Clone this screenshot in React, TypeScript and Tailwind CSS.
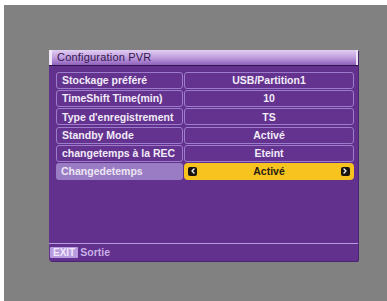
import { ChevronLeft, ChevronRight } from 'lucide-react';

const rows = [
  { label: 'Stockage préféré', value: 'USB/Partition1' },
  { label: 'TimeShift Time(min)', value: '10' },
  { label: "Type d'enregistrement", value: 'TS' },
  { label: 'Standby Mode', value: 'Activé' },
  { label: 'changetemps à la REC', value: 'Eteint' },
];

function ArrowKey({ dir }: { dir: 'left' | 'right' }) {
  const Icon = dir === 'left' ? ChevronLeft : ChevronRight;
  return (
    <span className="flex items-center justify-center w-[9px] h-[9px] rounded-[2px] bg-[#1a1410]">
      <Icon className="w-[8px] h-[8px] text-white" strokeWidth={4} />
    </span>
  );
}

export default function App() {
  return (
    <div
      className="w-[387px] h-[301px] bg-[#818181] border-t-[5px] border-l-[4px] border-white overflow-hidden"
      style={{ fontFamily: '"Liberation Sans", Arial, sans-serif' }}
    >
      <div className="ml-[45px] mt-[45px] w-[309px] h-[211px] flex flex-col bg-[#62318d] rounded-b-[2px] shadow-[1px_1px_0_#4a2470]">
        {/* title bar */}
        <div className="h-[15px] flex items-center bg-gradient-to-b from-[#e2cef2] via-[#c09ede] to-[#9060bc] border-l-[3px] border-[#f0e6f8] border-r-[2px] border-r-[#ece4f2] pl-[5px]">
          <span className="text-[11px] leading-none text-[#34164f] tracking-[0.2px]">Configuration PVR</span>
        </div>
        <div className="h-px bg-[#2e1448]" />

        {/* settings list */}
        <div className="flex-1 flex flex-col gap-[1.2px] pt-[6px] pl-[7px] pr-[4px]">
          {rows.map((row) => (
            <div key={row.label} className="flex h-[17px] gap-px">
              <div className="w-[127px] flex items-center pl-[5px] border border-[#9d7ccb] rounded-[3px] bg-[#64338f]">
                <span className="text-[10.5px] leading-none font-bold text-[#f2ecf8] whitespace-nowrap">{row.label}</span>
              </div>
              <div className="flex-1 flex items-center justify-center border border-[#9d7ccb] rounded-[3px] bg-[#64338f]">
                <span className="text-[10.5px] leading-none font-bold text-[#f2ecf8]">{row.value}</span>
              </div>
            </div>
          ))}
          <div className="flex h-[17px] gap-px">
            <div className="w-[127px] flex items-center pl-[5px] rounded-[3px] bg-[#9a7cc4]">
              <span className="text-[10.5px] leading-none font-bold text-[#ece6f4]">Changedetemps</span>
            </div>
            <div className="flex-1 flex items-center justify-between px-[4px] rounded-[4px] bg-[#f7c31f]">
              <ArrowKey dir="left" />
              <span className="text-[10.5px] leading-none font-bold text-[#2a1c10]">Activé</span>
              <ArrowKey dir="right" />
            </div>
          </div>
        </div>

        {/* footer */}
        <div className="h-px bg-[#b89ade]" />
        <div className="h-[17px] flex items-center gap-[2px] pl-[1px]">
          <span className="px-[3px] h-[11px] flex items-center bg-[#b99be0] rounded-[1px] text-[10px] leading-none text-[#efe6fa] font-bold">EXIT</span>
          <span className="text-[10.5px] leading-none font-bold text-[#c8b0e6]">Sortie</span>
        </div>
      </div>
    </div>
  );
}
